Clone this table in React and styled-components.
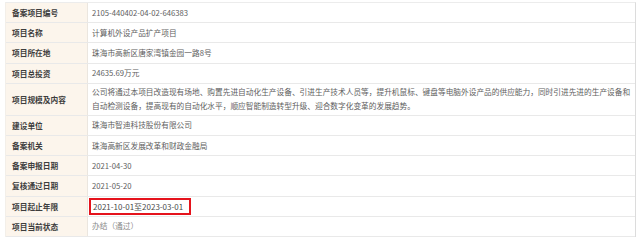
import React from "react";
import styled, { createGlobalStyle } from "styled-components";

const Global = createGlobalStyle`
  html, body { margin: 0; padding: 0; background: #fff; }
  body { font-family: "Noto Sans CJK SC", "Noto Sans", sans-serif; }
`;

const Table = styled.div`
  margin: 2px 0 0 5px;
  width: 631px;
  border-top: 1px solid #ececec;
  border-right: 1px solid #dcdcdc;
  border-left: 1px solid #f3efe9;
  box-sizing: border-box;
`;

const Row = styled.div`
  display: grid;
  grid-template-columns: 82px 1fr;
  height: ${(p) => (p.$tall ? "32px" : "20.2px")};
  border-bottom: 1px solid #e9e9e9;
  box-sizing: border-box;
`;

const Label = styled.div`
  background: #fcf5ec;
  border-right: 1px solid #ebe6df;
  display: flex;
  align-items: center;
  padding-left: 6px;
  font-size: 7.7px;
  font-weight: 700;
  color: #3d3d3d;
  white-space: nowrap;
`;

const Value = styled.div`
  display: flex;
  align-items: center;
  padding: 0 4px;
  font-size: 7.7px;
  line-height: 14px;
  color: ${(p) => (p.$muted ? "#8a8a8a" : "#5e5e5e")};
  white-space: ${(p) => (p.$wrap ? "normal" : "nowrap")};
`;

const Mark = styled.span`
  display: inline-block;
  margin-left: -3px;
  padding: 0 6px 0 2px;
  border: 2px solid #e5131c;
  line-height: 13px;
  color: #4a4a4a;
  font-size: 8px;
`;

const rows = [
  ["备案项目编号", "2105-440402-04-02-646383"],
  ["项目名称", "计算机外设产品扩产项目"],
  ["项目所在地", "珠海市高新区唐家湾镇金园一路8号"],
  ["项目总投资", "24635.69万元"],
  [
    "项目规模及内容",
    "公司将通过本项目改造现有场地、购置先进自动化生产设备、引进生产技术人员等，提升机鼠标、键盘等电脑外设产品的供应能力，同时引进先进的生产设备和自动检测设备，提高现有的自动化水平，顺应智能制造转型升级、迎合数字化变革的发展趋势。",
    "tall",
  ],
  ["建设单位", "珠海市智迪科技股份有限公司"],
  ["备案机关", "珠海高新区发展改革和财政金融局"],
  ["备案申报日期", "2021-04-30"],
  ["复核通过日期", "2021-05-20"],
  ["项目起止年限", "2021-10-01至2023-03-01", "mark"],
  ["项目当前状态", "办结（通过）", "muted"],
];

export default function App() {
  return (
    <>
      <Global />
      <Table>
        {rows.map(([label, value, kind]) => (
          <Row key={label} $tall={kind === "tall"}>
            <Label>{label}</Label>
            <Value $wrap={kind === "tall"} $muted={kind === "muted"}>
              {kind === "mark" ? <Mark>{value}</Mark> : value}
            </Value>
          </Row>
        ))}
      </Table>
    </>
  );
}
